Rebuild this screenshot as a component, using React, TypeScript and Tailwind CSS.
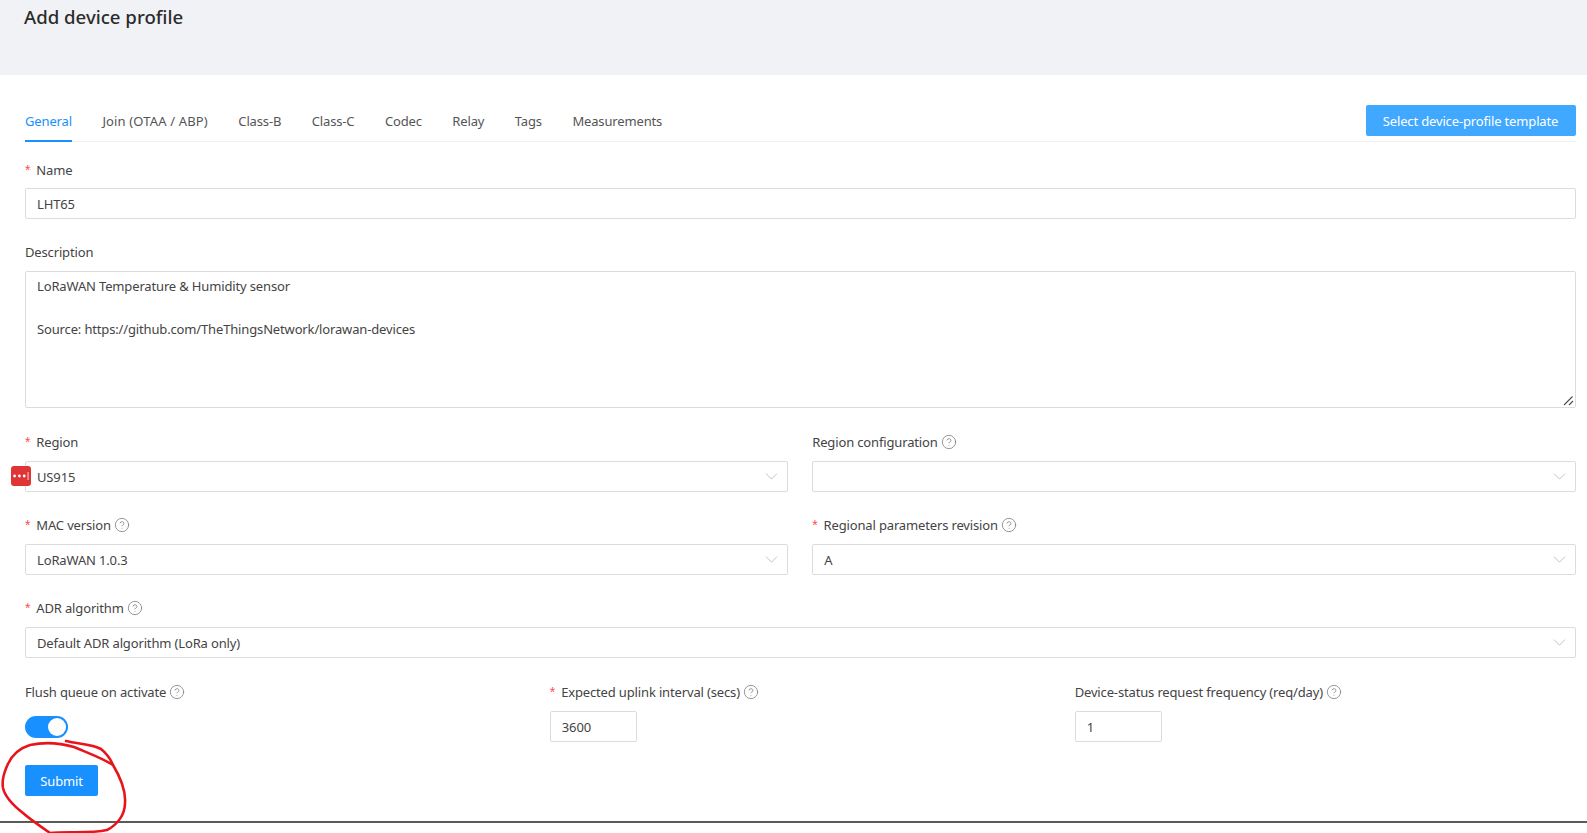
import React from "react";
import { ChevronDown, CircleHelp } from "lucide-react";

function Help() {
  return <CircleHelp size={16} strokeWidth={1.2} className="ml-[3px] text-[#7d7d7d] shrink-0" />;
}

function Label({ text, required, help, className = "" }: { text: string; required?: boolean; help?: boolean; className?: string }) {
  return (
    <div className={`flex items-center h-[22px] text-[#444444] ${className}`}>
      {required && <span className="text-[#ff4d4f] mr-[6px] text-[14px] font-['Liberation_Sans',sans-serif]">*</span>}
      <span>{text}</span>
      {help && <Help />}
    </div>
  );
}

function Select({ value }: { value?: string }) {
  return (
    <div className="flex items-center justify-between h-[31px] pl-[11px] pr-[5px] border border-[#dcdcdc] bg-white rounded-[2px] text-[#444444]">
      <span>{value}</span>
      <ChevronDown size={21} strokeWidth={0.8} className="text-[#a8a8a8]" />
    </div>
  );
}

const inputCls = "block w-full h-[31px] px-[11px] border border-[#dcdcdc] rounded-[2px] bg-white text-[#444444] outline-none";

export default function App() {
  const tabs = ["Class-B", "Class-C", "Codec", "Relay", "Tags", "Measurements"];
  return (
    <div className="relative h-[833px] w-[1587px] overflow-hidden bg-white flex flex-col text-[13px] tracking-[-0.15px] leading-[22px] font-['Noto_Sans',sans-serif]">
      <header className="h-[75px] bg-[#f0f2f5] pl-[24px] pt-[5px] shrink-0">
        <h1 className="text-[18.6px] leading-[24px] tracking-normal font-medium text-[#2b2b2b]">Add device profile</h1>
      </header>

      <main className="ml-[2px] flex-1 bg-white pl-[23px] pr-[11.5px] pt-[30px]">
        <div className="flex items-start justify-between h-[37px] border-b border-[#f0f0f0]">
          <nav className="flex gap-[30.5px] h-[37px]">
            <div className="h-[37px] border-b-2 border-[#1890ff] text-[#1890ff] flex items-start pt-[5px]">General</div>
            <div className="pt-[5px] text-[#555555] tracking-[0.15px]">Join (OTAA / ABP)</div>
            {tabs.map((t) => (
              <div key={t} className="pt-[5px] text-[#555555]">{t}</div>
            ))}
          </nav>
          <button className="h-[31px] w-[210px] rounded-[2px] bg-[#40a9ff] text-white">Select device-profile template</button>
        </div>

        <Label text="Name" required className="mt-[17px] mb-[7px]" />
        <input readOnly value="LHT65" className={inputCls} />

        <Label text="Description" className="mt-[22px] mb-[8px]" />
        <div className="relative">
          <textarea
            readOnly
            className="block w-full h-[137px] px-[11px] py-[4px] border border-[#dcdcdc] rounded-[2px] text-[#444444] outline-none leading-[21.4px] resize-none"
            defaultValue={"LoRaWAN Temperature & Humidity sensor\n\nSource: https://github.com/TheThingsNetwork/lorawan-devices"}
          />
          <svg className="absolute right-[2px] bottom-[2px]" width="11" height="11" viewBox="0 0 11 11" fill="none">
            <path d="M1 10 L9.5 1.5" stroke="#4a4a4a" strokeWidth="1.1" />
            <path d="M6 10 L10 6" stroke="#4a4a4a" strokeWidth="1.1" />
          </svg>
        </div>

        <div className="grid grid-cols-2 gap-x-[24px] mt-[23px]">
          <div>
            <Label text="Region" required className="mb-[8px]" />
            <Select value="US915" />
          </div>
          <div>
            <Label text="Region configuration" help className="mb-[8px]" />
            <Select />
          </div>
        </div>

        <div className="grid grid-cols-2 gap-x-[24px] mt-[22px]">
          <div>
            <Label text="MAC version" required help className="mb-[8px]" />
            <Select value="LoRaWAN 1.0.3" />
          </div>
          <div>
            <Label text="Regional parameters revision" required help className="mb-[8px]" />
            <Select value="A" />
          </div>
        </div>

        <Label text="ADR algorithm" required help className="mt-[22px] mb-[8px]" />
        <Select value="Default ADR algorithm (LoRa only)" />

        <div className="grid grid-cols-3 gap-x-[24px] mt-[23px]">
          <div>
            <Label text="Flush queue on activate" help className="mb-[13px]" />
            <button className="flex items-center justify-end w-[43px] h-[22px] rounded-full bg-[#1890ff] pr-[2px]">
              <span className="block w-[18px] h-[18px] rounded-full bg-white" />
            </button>
          </div>
          <div>
            <Label text="Expected uplink interval (secs)" required help className="mb-[8px]" />
            <input readOnly value="3600" className={`${inputCls} !w-[87px]`} />
          </div>
          <div>
            <Label text="Device-status request frequency (req/day)" help className="mb-[8px]" />
            <input readOnly value="1" className={`${inputCls} !w-[87px]`} />
          </div>
        </div>

        <button className="mt-[23px] h-[31px] w-[73px] rounded-[2px] bg-[#1890ff] text-white">Submit</button>
      </main>

      <div className="h-[2px] bg-[#5a5a5a] shrink-0" />
      <div className="h-[10px] bg-white shrink-0" />

      <svg className="absolute left-[11px] top-[466px]" width="20" height="20" viewBox="0 0 20 20">
        <rect width="20" height="20" rx="3" fill="#e03535" />
        <circle cx="3.6" cy="10" r="1.4" fill="#fff" />
        <circle cx="8.4" cy="10" r="1.4" fill="#fff" />
        <circle cx="13.2" cy="10" r="1.4" fill="#fff" />
        <rect x="16.6" y="6" width="0.9" height="8" fill="#fff" opacity="0.85" />
      </svg>

      <svg className="absolute left-0 top-[735px] pointer-events-none" width="135" height="98" viewBox="0 735 135 98" fill="none">
        <path
          d="M66 741 C78 744 92 744 101 749 C106 753 111 760 113 765 C102 758 88 753 74 747 C60 743 44 742 30 745 C20 748 12 754 7 766 C3 775 2 782 3 788 C5 797 14 806 23 813 C32 821 42 827 50 833 C66 831 90 834 107 830 C117 825 125 815 125 803 C126 790 119 775 113 765"
          stroke="#e8141c"
          strokeWidth="2.6"
          strokeLinecap="round"
          strokeLinejoin="round"
        />
      </svg>
    </div>
  );
}
